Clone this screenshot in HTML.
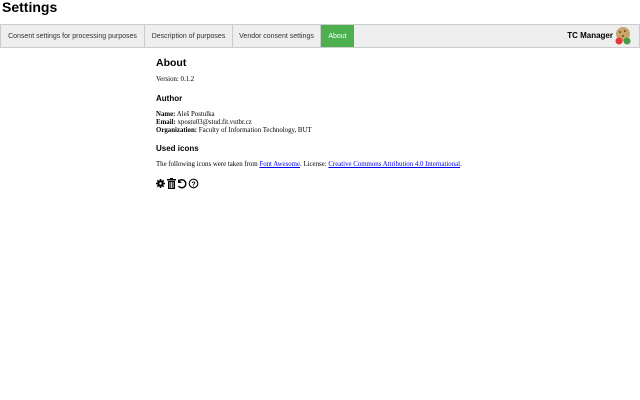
<!DOCTYPE html>
<html><head><style>
body{margin:0;width:640px;height:400px;background:#fff;font-family:"Liberation Serif",serif;overflow:hidden;position:relative}
.t{position:absolute;left:2px;top:-1px;font:bold 14px "Liberation Sans",sans-serif;margin:0}
.nav{position:absolute;left:0;top:24px;width:638px;height:22px;background:#eee;border:1px solid #ccc;font:7px "Liberation Sans",sans-serif;color:#333}
.nav div{position:absolute;top:0;height:22px;line-height:24px;text-align:center;border-right:1px solid #ccc}
.c{position:absolute;left:156px;font-size:6.85px;color:#000;white-space:nowrap}
h2,h3{margin:0;font-family:"Liberation Sans",sans-serif;position:absolute;left:156px;white-space:nowrap}
h2{font-size:10.5px}h3{font-size:8px}
a{color:#00e}
</style></head><body>
<div class="t">Settings</div>
<div class="nav">
<div style="left:0;width:143px">Consent settings for processing purposes</div>
<div style="left:144px;width:87px">Description of purposes</div>
<div style="left:232px;width:87px">Vendor consent settings</div>
<div style="left:320px;width:33px;background:#4caf50;color:#fff;border:none">About</div>
<div style="right:26px;border:none;font-weight:bold;color:#000;font-size:8px;line-height:22px">TC Manager</div>
<svg style="position:absolute;right:6px;top:1px" width="20" height="20" viewBox="0 0 20 20"><circle cx="10" cy="8" r="7" fill="#c9a66b"/><circle cx="7" cy="6" r="1" fill="#6b4a2a"/><circle cx="12" cy="5" r="1" fill="#6b4a2a"/><circle cx="10" cy="10" r="1" fill="#6b4a2a"/><circle cx="6" cy="15" r="3.5" fill="#e53935"/><circle cx="14" cy="15" r="3.5" fill="#43a047"/></svg>
</div>
<h2 style="top:57px">About</h2>
<div class="c" style="top:76px">Version: 0.1.2</div>
<h3 style="top:94px">Author</h3>
<div class="c" style="top:111px"><b>Name:</b> Aleš Postulka</div>
<div class="c" style="top:119px"><b>Email:</b> xpostu03@stud.fit.vutbr.cz</div>
<div class="c" style="top:127px"><b>Organization:</b> Faculty of Information Technology, BUT</div>
<h3 style="top:144px">Used icons</h3>
<div class="c" style="top:161px">The following icons were taken from <a href="#">Font Awesome</a>. License: <a href="#">Creative Commons Attribution 4.0 International</a>.</div>
<svg style="position:absolute;left:156px;top:178px" width="44" height="11" viewBox="0 0 44 11">
<g fill="#000"><circle cx="4.5" cy="5.5" r="3.2"/><g stroke="#000" stroke-width="1.6"><line x1="4.5" y1="1" x2="4.5" y2="10"/><line x1="0" y1="5.5" x2="9" y2="5.5"/><line x1="1.3" y1="2.3" x2="7.7" y2="8.7"/><line x1="7.7" y1="2.3" x2="1.3" y2="8.7"/></g><circle cx="4.5" cy="5.5" r="1.2" fill="#fff"/>
<rect x="11" y="1" width="9" height="1.5"/><rect x="14" y="0" width="3" height="1.5"/><rect x="12" y="3" width="7" height="8"/><g fill="#fff"><rect x="13.5" y="4" width=".8" height="6"/><rect x="15.1" y="4" width=".8" height="6"/><rect x="16.7" y="4" width=".8" height="6"/></g></g>
<path d="M23.5 2.5 A4 4 0 1 1 22.5 8" fill="none" stroke="#000" stroke-width="1.5"/><path d="M22 1v4h4z" fill="#000"/>
<circle cx="37.5" cy="5.5" r="4.3" fill="none" stroke="#000" stroke-width="1.1"/><text x="37.5" y="8.3" font-size="7" font-family="Liberation Sans" font-weight="bold" text-anchor="middle">?</text>
</svg>
</body></html>
